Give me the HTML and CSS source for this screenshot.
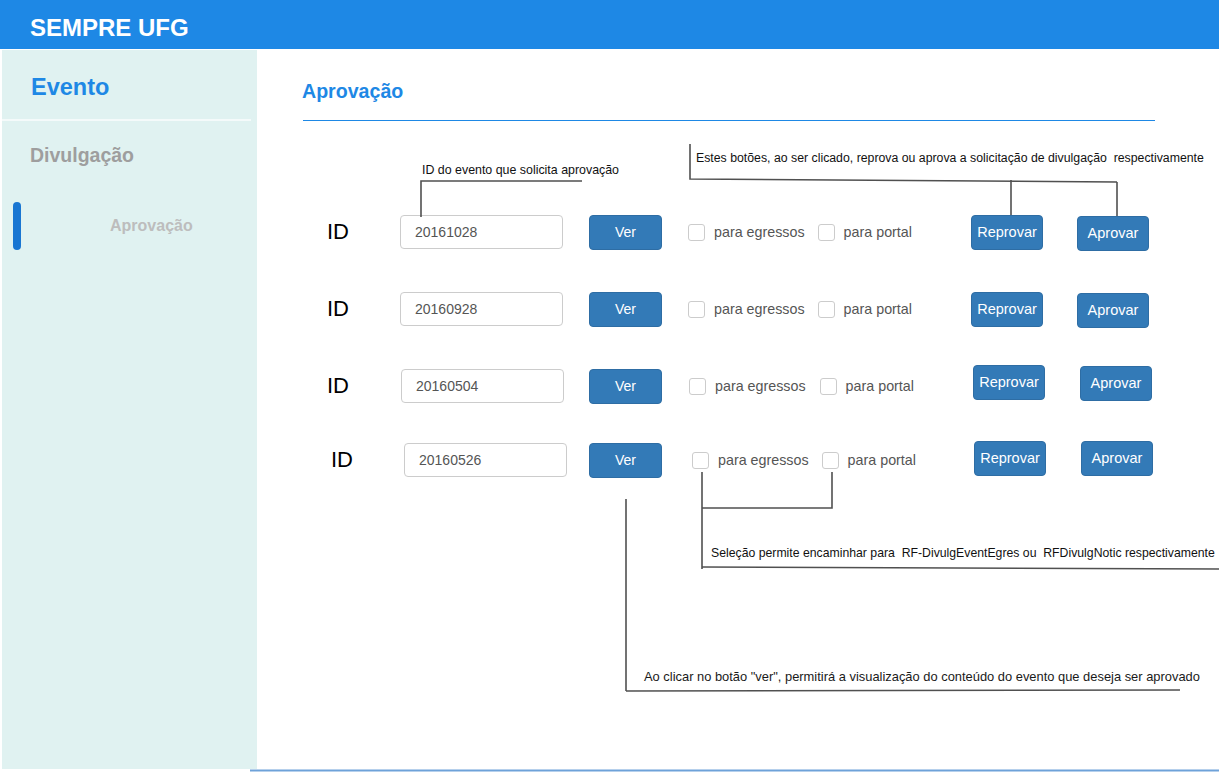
FILE: index.html
```html
<!DOCTYPE html>
<html lang="pt-BR">
<head>
<meta charset="utf-8">
<title>SEMPRE UFG - Aprovação</title>
<link rel="stylesheet" href="styles.css">
</head>
<body>
<header class="topbar">SEMPRE UFG</header>
<div class="layout">
  <aside class="sidebar">
    <div class="side-title">Evento</div>
    <div class="side-divider"></div>
    <div class="side-section">Divulgação</div>
    <div class="side-item">
      <span class="side-indicator"></span>
      <span class="side-item-label">Aprovação</span>
    </div>
  </aside>
  <main class="main">
    <h1 class="page-title">Aprovação</h1>
    <div class="title-rule"></div>
    <div class="rows">
      <div class="row">
        <span class="id-label">ID</span>
        <input class="id-input" type="text" value="20161028" readonly>
        <button class="btn btn-ver">Ver</button>
        <div class="checks">
          <span class="cb"></span><span class="cb-label">para egressos</span>
          <span class="cb cb-second"></span><span class="cb-label">para portal</span>
        </div>
        <div class="actions">
          <button class="btn btn-act">Reprovar</button>
          <button class="btn btn-act btn-aprovar">Aprovar</button>
        </div>
      </div>
      <div class="row">
        <span class="id-label">ID</span>
        <input class="id-input" type="text" value="20160928" readonly>
        <button class="btn btn-ver">Ver</button>
        <div class="checks">
          <span class="cb"></span><span class="cb-label">para egressos</span>
          <span class="cb cb-second"></span><span class="cb-label">para portal</span>
        </div>
        <div class="actions">
          <button class="btn btn-act">Reprovar</button>
          <button class="btn btn-act btn-aprovar">Aprovar</button>
        </div>
      </div>
      <div class="row row-c">
        <span class="id-label">ID</span>
        <input class="id-input" type="text" value="20160504" readonly>
        <button class="btn btn-ver">Ver</button>
        <div class="checks">
          <span class="cb"></span><span class="cb-label">para egressos</span>
          <span class="cb cb-second"></span><span class="cb-label">para portal</span>
        </div>
        <div class="actions">
          <button class="btn btn-act">Reprovar</button>
          <button class="btn btn-act btn-aprovar">Aprovar</button>
        </div>
      </div>
      <div class="row row-d">
        <span class="id-label">ID</span>
        <input class="id-input" type="text" value="20160526" readonly>
        <button class="btn btn-ver">Ver</button>
        <div class="checks">
          <span class="cb"></span><span class="cb-label">para egressos</span>
          <span class="cb cb-second"></span><span class="cb-label">para portal</span>
        </div>
        <div class="actions">
          <button class="btn btn-act">Reprovar</button>
          <button class="btn btn-act btn-aprovar">Aprovar</button>
        </div>
      </div>
    </div>
  </main>
</div>

<svg class="annot-lines" width="1219" height="772" viewBox="0 0 1219 772" aria-hidden="true">
  <g fill="none" stroke="#505050" stroke-width="1.6">
    <polyline points="421,217 421,181 582,181"/>
    <polyline points="690,144 690,179 1117,182"/>
    <line x1="1011" y1="180" x2="1011" y2="215"/>
    <line x1="1117" y1="182" x2="1117" y2="216"/>
    <line x1="702" y1="472" x2="702" y2="569"/>
    <polyline points="702,508 832,508 832,472"/>
    <line x1="702" y1="567" x2="1219" y2="569"/>
    <line x1="626" y1="499" x2="626" y2="691"/>
    <line x1="626" y1="691" x2="1180" y2="690"/>
  </g>
  <line x1="250" y1="770.5" x2="1219" y2="770.5" stroke="#6ea2d9" stroke-width="2"/>
</svg>
<div class="note note-id">ID do evento que solicita aprovação</div>
<div class="note note-btns">Estes botões, ao ser clicado, reprova ou aprova a solicitação de divulgação&nbsp; respectivamente</div>
<div class="note note-sel">Seleção permite encaminhar para&nbsp; RF-DivulgEventEgres ou&nbsp; RFDivulgNotic respectivamente</div>
<div class="note note-ver">Ao clicar no botão "ver", permitirá a visualização do conteúdo do evento que deseja ser aprovado</div>
</body>
</html>
```

FILE: styles.css
```css
* { box-sizing: border-box; }

html, body {
  margin: 0;
  padding: 0;
  background: #ffffff;
}

body {
  position: relative;
  width: 1219px;
  height: 772px;
  overflow: hidden;
  font-family: "Liberation Sans", Arial, sans-serif;
}

.topbar {
  height: 49px;
  background: #1e88e5;
  color: #ffffff;
  font-weight: bold;
  font-size: 24px;
  line-height: 28px;
  padding: 14px 0 0 30px;
}

.layout {
  display: flex;
  height: 723px;
  padding-top: 1px;
}

.sidebar {
  width: 255px;
  height: 719px;
  margin-left: 2px;
  background: #e0f2f1;
  padding-top: 24px;
}

.side-title {
  font-size: 23.5px;
  line-height: 26px;
  font-weight: bold;
  color: #1e88e5;
  padding-left: 29px;
}

.side-divider {
  height: 2px;
  width: 249px;
  margin-top: 19px;
  background: #f4fafa;
}

.side-section {
  margin-top: 22px;
  font-size: 19.5px;
  line-height: 24px;
  font-weight: bold;
  color: #9e9e9e;
  padding-left: 28px;
}

.side-item {
  display: flex;
  align-items: center;
  height: 48px;
  margin-top: 35px;
  padding-left: 11px;
}

.side-indicator {
  width: 8px;
  height: 48px;
  border-radius: 4px;
  background: #1976d2;
}

.side-item-label {
  margin-left: 89px;
  font-size: 16px;
  line-height: 20px;
  font-weight: bold;
  color: #bdbdbd;
}

.main {
  flex: 1;
  padding: 29px 0 0 45px;
}

.page-title {
  margin: 0;
  font-size: 19.6px;
  line-height: 24px;
  font-weight: bold;
  color: #1e88e5;
}

.title-rule {
  margin: 17px 0 0 1px;
  width: 852px;
  height: 1px;
  background: #1e88e5;
}

.rows {
  margin-top: 93px;
  display: flex;
  flex-direction: column;
  gap: 41px;
}

.row {
  display: flex;
  align-items: center;
  height: 36px;
  padding-left: 25px;
}

.id-label {
  width: 73px;
  font-size: 22px;
  color: #000000;
}

.id-input {
  width: 163px;
  height: 34px;
  margin: 0;
  border: 1px solid #cccccc;
  border-radius: 4px;
  padding: 0 0 0 14px;
  font-family: "Liberation Sans", Arial, sans-serif;
  font-size: 14px;
  color: #555555;
  background: #ffffff;
  outline: none;
}

.btn {
  height: 35px;
  margin: 0;
  padding: 0;
  border: 1px solid #2e6da4;
  border-radius: 4px;
  background: #337ab7;
  color: #ffffff;
  font-family: "Liberation Sans", Arial, sans-serif;
  font-size: 14px;
}

.btn-ver {
  width: 73px;
  margin-left: 26px;
}

.checks {
  display: flex;
  align-items: center;
  width: 283px;
  margin-left: 26px;
}

.cb {
  width: 17px;
  height: 17px;
  border: 1px solid #cccccc;
  border-radius: 3px;
  background: #ffffff;
  flex: none;
}

.cb-second { margin-left: 13px; }

.cb-label {
  margin-left: 9px;
  font-size: 14.3px;
  color: #555555;
}

.actions {
  display: flex;
  align-items: center;
}

.btn-act { width: 72px; font-size: 14.5px; }
.btn-aprovar { margin-left: 34px; transform: translateY(1px); }

.row-c .id-label { width: 74px; }
.row-c .btn-ver { margin-left: 25px; }
.row-c .checks { margin-left: 27px; }
.row-c .cb-second { margin-left: 14px; }
.row-c .actions { transform: translate(1px, -4px); }
.row-c .btn-aprovar { margin-left: 35px; }

.row-d { margin-top: -3px; }
.row-d .id-label { width: 77px; padding-left: 4px; }
.row-d .btn-ver { margin-left: 22px; }
.row-d .checks { margin-left: 30px; }
.row-d .cb-second { margin-left: 13px; }
.row-d .actions { transform: translate(-1px, -2px); }
.row-d .btn-aprovar { margin-left: 35px; transform: none; }

.annot-lines {
  position: absolute;
  left: 0;
  top: 0;
  pointer-events: none;
}

.note {
  position: absolute;
  white-space: nowrap;
  font-family: "Liberation Sans", Arial, sans-serif;
  font-size: 12.3px;
  line-height: 14px;
  color: #111111;
}

.note-id { left: 422px; top: 163px; font-size: 12.4px; }
.note-btns { left: 696px; top: 151px; }
.note-sel { left: 711px; top: 546px; font-size: 12.25px; }
.note-ver { left: 644px; top: 670px; font-size: 12.9px; color: #1a1a1a; }
```
